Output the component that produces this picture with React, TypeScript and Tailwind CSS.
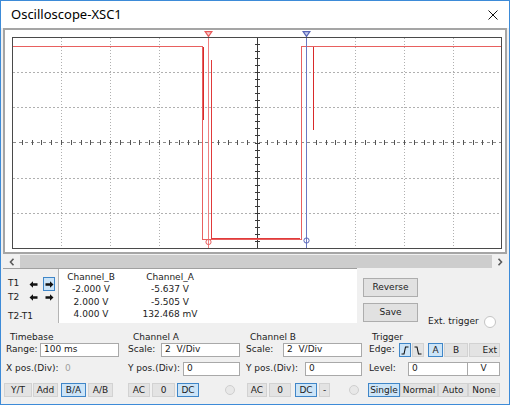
import React from 'react'

type BtnProps = { className: string; active?: boolean; children?: React.ReactNode }

function Btn({ className, active, children }: BtnProps) {
  return (
    <div
      className={`h-[14px] flex items-center justify-center border leading-none ${
        active ? 'bg-[#cce4f7] border-[#3f86c8]' : 'bg-[#e3e3e3] border-[#d2d2d2]'
      } ${className}`}
    >
      {children}
    </div>
  )
}

function Field({ className, children, muted }: { className: string; children?: React.ReactNode; muted?: boolean }) {
  return (
    <div
      className={`h-[14px] flex items-center pl-[3px] bg-white border border-[#a9a9a9] whitespace-pre ${
        muted ? 'text-[#9a9a9a]' : ''
      } ${className}`}
    >
      {children}
    </div>
  )
}

function Radio({ className }: { className: string }) {
  return <div className={`w-[10px] h-[10px] rounded-full border border-[#cfcfcf] bg-[#e8e8e8] ${className}`} />
}

function Arrow({ dir }: { dir: 'left' | 'right' }) {
  return (
    <svg width="9" height="7" viewBox="0 0 9 7">
      <path
        d={dir === 'left' ? 'M0.5,3.5 L4,0.3 V2.3 H8.5 V4.7 H4 V6.7 Z' : 'M8.5,3.5 L5,0.3 V2.3 H0.5 V4.7 H5 V6.7 Z'}
        fill="#111"
      />
    </svg>
  )
}

function Chevron({ dir }: { dir: 'left' | 'right' }) {
  return (
    <svg width="6" height="8" viewBox="0 0 6 8">
      <path d={dir === 'left' ? 'M4.5,0.8 L1.5,4 L4.5,7.2' : 'M1.5,0.8 L4.5,4 L1.5,7.2'} fill="none" stroke="#5a5a5a" strokeWidth="1.6" />
    </svg>
  )
}

function Plot() {
  const vx = Array.from({ length: 9 }, (_, i) => 12 + 49 * (i + 1)).filter((x) => x !== 257)
  const hy = [1, 2, 4, 5].map((k) => 37 + 35.17 * k)
  const xTicks = Array.from({ length: 49 }, (_, j) => 12 + 9.8 * (j + 1))
  const yTicks = Array.from({ length: 29 }, (_, j) => 37 + 7.034 * (j + 1))

  return (
    <svg width="500" height="222" viewBox="5 30 500 222" shapeRendering="crispEdges">
      {/* grid */}
      {vx.map((x) => (
        <line key={x} x1={x + 0.5} y1={38} x2={x + 0.5} y2={248} stroke="#b0b0b0" strokeDasharray="1 2" />
      ))}
      {hy.map((y) => (
        <line key={y} x1={13} y1={Math.round(y) + 0.5} x2={501} y2={Math.round(y) + 0.5} stroke="#b0b0b0" strokeDasharray="2 2" />
      ))}
      {/* centre axes */}
      <line x1={13} y1={142.5} x2={501} y2={142.5} stroke="#8c8c8c" strokeDasharray="3 3" />
      {xTicks.map((x) => (
        <line key={x} x1={Math.round(x) + 0.5} y1={140} x2={Math.round(x) + 0.5} y2={145} stroke="#555" />
      ))}
      <line x1={257.5} y1={37} x2={257.5} y2={248} stroke="#3a3a3a" />
      {yTicks.map((y) => (
        <line key={y} x1={255} y1={Math.round(y) + 0.5} x2={260} y2={Math.round(y) + 0.5} stroke="#3a3a3a" />
      ))}

      {/* traces */}
      <path d="M13,46.5 H202.5 V239.5 H301.5 V46.5 H501" fill="none" stroke="#e8605f" />
      <path d="M211.5,60 V238.5 H300" fill="none" stroke="#e03a3a" />
      <path d="M203.5,47 V120" fill="none" stroke="#d82a2a" />
      <path d="M313.5,47 V130" fill="none" stroke="#d82a2a" />

      {/* cursor T1 */}
      <line x1={208.5} y1={37} x2={208.5} y2={248} stroke="#ef8080" />
      <path d="M204,31 H213 L208.5,37.5 Z" fill="#e85a5a" shapeRendering="auto" />
      <path d="M206.3,32.2 H210.7 L208.5,35.3 Z" fill="#fbd0d0" shapeRendering="auto" />
      <circle cx={208.5} cy={242} r={2.6} fill="none" stroke="#e86060" shapeRendering="auto" />

      {/* cursor T2 */}
      <line x1={306.5} y1={37} x2={306.5} y2={248} stroke="#6b78c2" />
      <path d="M302,31 H311 L306.5,37.5 Z" fill="#5866b8" shapeRendering="auto" />
      <path d="M304.3,32.2 H308.7 L306.5,35.3 Z" fill="#c7cff0" shapeRendering="auto" />
      <circle cx={306.5} cy={240.5} r={2.6} fill="none" stroke="#5866b8" shapeRendering="auto" />

      {/* frame */}
      <rect x={12.5} y={37.5} width={489} height={210.5} fill="none" stroke="#4a4a4a" />
    </svg>
  )
}

export default function App() {
  return (
    <div className="w-[510px] h-[405px] bg-[#f0f0f0] border border-[#3d8bd8] flex flex-col overflow-hidden text-[9px] text-[#1c1c1c] font-['DejaVu_Sans',sans-serif]">
      {/* title bar */}
      <div className="h-[27px] shrink-0 bg-white flex items-center justify-between pl-[10px] pr-[11px]">
        <span className="font-['Noto_Sans',sans-serif] text-[13px] text-black">Oscilloscope-XSC1</span>
        <svg width="10" height="10" viewBox="0 0 10 10">
          <path d="M0.5,0.5 L9.5,9.5 M9.5,0.5 L0.5,9.5" stroke="#111" strokeWidth="1" />
        </svg>
      </div>

      {/* display */}
      <div className="shrink-0 ml-[2px] w-[504px] h-[226px] border-2 border-[#a5a5a5] bg-white">
        <Plot />
      </div>

      {/* scrollbar */}
      <div className="shrink-0 mt-[1px] ml-[2px] w-[504px] h-[13px] flex">
        <div className="w-[17px] flex items-center justify-center">
          <Chevron dir="left" />
        </div>
        <div className="flex-1 bg-[#cdcdcd]" />
        <div className="w-[15px] flex items-center justify-center">
          <Chevron dir="right" />
        </div>
      </div>

      {/* cursor readout */}
      <div className="shrink-0 h-[58px] flex">
        <div className="ml-[2px] w-[354px] h-[55px] border-t border-[#a0a0a0] flex">
          <div className="w-[56px] border-r border-[#b4b4b4] flex flex-col pt-[8px]">
            <div className="h-[14px] flex items-center">
              <span className="ml-[5px] w-[19px]">T1</span>
              <div className="w-[12px] h-[14px] flex items-center justify-center">
                <Arrow dir="left" />
              </div>
              <div className="ml-[4px] w-[12px] h-[14px] flex items-center justify-center bg-[#cce4f7] border border-[#3f86c8]">
                <Arrow dir="right" />
              </div>
            </div>
            <div className="h-[13px] flex items-center">
              <span className="ml-[5px] w-[19px]">T2</span>
              <div className="w-[12px] h-[13px] flex items-center justify-center">
                <Arrow dir="left" />
              </div>
              <div className="ml-[4px] w-[12px] h-[13px] flex items-center justify-center">
                <Arrow dir="right" />
              </div>
            </div>
            <div className="mt-[6px] ml-[5px] leading-[12px]">T2-T1</div>
          </div>
          <div className="flex-1 bg-white flex pt-[2px] leading-[12.3px]">
            <div className="w-[64px] flex flex-col items-center">
              <span>Channel_B</span>
              <span>-2.000 V</span>
              <span>2.000 V</span>
              <span>4.000 V</span>
            </div>
            <div className="w-[94px] flex flex-col items-center">
              <span>Channel_A</span>
              <span>-5.637 V</span>
              <span>-5.505 V</span>
              <span>132.468 mV</span>
            </div>
          </div>
        </div>
        <div className="ml-[6px] flex flex-col pt-[10px]">
          <div className="w-[55px] h-[19px] flex items-center justify-center bg-[#e1e1e1] border border-[#adadad]">Reverse</div>
          <div className="mt-[6px] w-[55px] h-[19px] flex items-center justify-center bg-[#e1e1e1] border border-[#adadad]">Save</div>
        </div>
        <div className="ml-[10px] pt-[47px] flex items-start">
          <div className="h-[13px] flex items-center">
            <span>Ext. trigger</span>
            <div className="ml-[5px] w-[12px] h-[12px] rounded-full border border-[#c4c4c4] bg-white" />
          </div>
        </div>
      </div>

      {/* controls */}
      <div className="shrink-0 flex pt-[5px]">
        {/* Timebase */}
        <div className="w-[123px] flex flex-col">
          <div className="h-[12px] leading-[12px] ml-[9px]">Timebase</div>
          <div className="h-[14px] flex items-center">
            <span className="ml-[5px] w-[34px]">Range:</span>
            <Field className="w-[79px]">100 ms</Field>
          </div>
          <div className="mt-[5px] h-[14px] flex items-center">
            <span className="ml-[5px] w-[59px]">X pos.(Div):</span>
            <span className="text-[#a0a0a0]">0</span>
          </div>
          <div className="mt-[7px] flex">
            <Btn className="ml-[3px] w-[28px]">Y/T</Btn>
            <Btn className="ml-[1px] w-[25px]">Add</Btn>
            <Btn className="ml-[3px] w-[25px]" active>B/A</Btn>
            <Btn className="ml-[2px] w-[25px]">A/B</Btn>
          </div>
        </div>

        {/* Channel A */}
        <div className="w-[119px] flex flex-col">
          <div className="h-[12px] leading-[12px] ml-[9px]">Channel A</div>
          <div className="h-[14px] flex items-center">
            <span className="ml-[4px] w-[33px]">Scale:</span>
            <Field className="w-[79px]">2  V/Div</Field>
          </div>
          <div className="mt-[5px] h-[14px] flex items-center">
            <span className="ml-[4px] w-[55px]">Y pos.(Div):</span>
            <Field className="w-[57px]">0</Field>
          </div>
          <div className="mt-[7px] flex items-center">
            <Btn className="ml-[4px] w-[22px]">AC</Btn>
            <Btn className="ml-[2px] w-[23px]">0</Btn>
            <Btn className="ml-[2px] w-[22px]" active>DC</Btn>
            <Radio className="ml-[26px]" />
          </div>
        </div>

        {/* Channel B */}
        <div className="w-[122px] flex flex-col">
          <div className="h-[12px] leading-[12px] ml-[7px]">Channel B</div>
          <div className="h-[14px] flex items-center">
            <span className="ml-[3px] w-[37px]">Scale:</span>
            <Field className="w-[79px]">2  V/Div</Field>
          </div>
          <div className="mt-[5px] h-[14px] flex items-center">
            <span className="ml-[3px] w-[59px]">Y pos.(Div):</span>
            <Field className="w-[57px]">0</Field>
          </div>
          <div className="mt-[7px] flex items-center">
            <Btn className="ml-[4px] w-[20px]">AC</Btn>
            <Btn className="ml-[2px] w-[22px]">0</Btn>
            <Btn className="ml-[4px] w-[22px]" active>DC</Btn>
            <Btn className="ml-[2px] w-[11px]">-</Btn>
            <Radio className="ml-[19px]" />
          </div>
        </div>

        {/* Trigger */}
        <div className="flex-1 flex flex-col">
          <div className="h-[12px] leading-[12px] ml-[7px]">Trigger</div>
          <div className="h-[14px] flex items-center">
            <span className="ml-[4px] w-[30px]">Edge:</span>
            <Btn className="w-[12px]" active>
              <svg width="8" height="9" viewBox="0 0 8 9">
                <path d="M0.5,8 H3 L4.5,1 H7.5" fill="none" stroke="#111" strokeWidth="1.1" />
              </svg>
            </Btn>
            <Btn className="ml-[1px] w-[12px]">
              <svg width="8" height="9" viewBox="0 0 8 9">
                <path d="M0.5,1 H3 L4.5,8 H7.5" fill="none" stroke="#111" strokeWidth="1.1" />
              </svg>
            </Btn>
            <Btn className="ml-[4px] w-[15px]" active>A</Btn>
            <Btn className="ml-[1px] w-[24px]">B</Btn>
            <Btn className="ml-[1px] w-[31px] !justify-end pr-[2px]">Ext</Btn>
          </div>
          <div className="mt-[5px] h-[14px] flex items-center">
            <span className="ml-[4px] w-[39px]">Level:</span>
            <Field className="w-[60px]">0</Field>
            <div className="w-[32px] h-[14px] flex items-center justify-center bg-white border border-l-0 border-[#a9a9a9]">V</div>
          </div>
          <div className="mt-[7px] flex">
            <Btn className="ml-[3px] w-[32px]" active>Single</Btn>
            <Btn className="w-[38px]">Normal</Btn>
            <Btn className="w-[30px]">Auto</Btn>
            <Btn className="w-[32px]">None</Btn>
          </div>
        </div>
      </div>
    </div>
  )
}
